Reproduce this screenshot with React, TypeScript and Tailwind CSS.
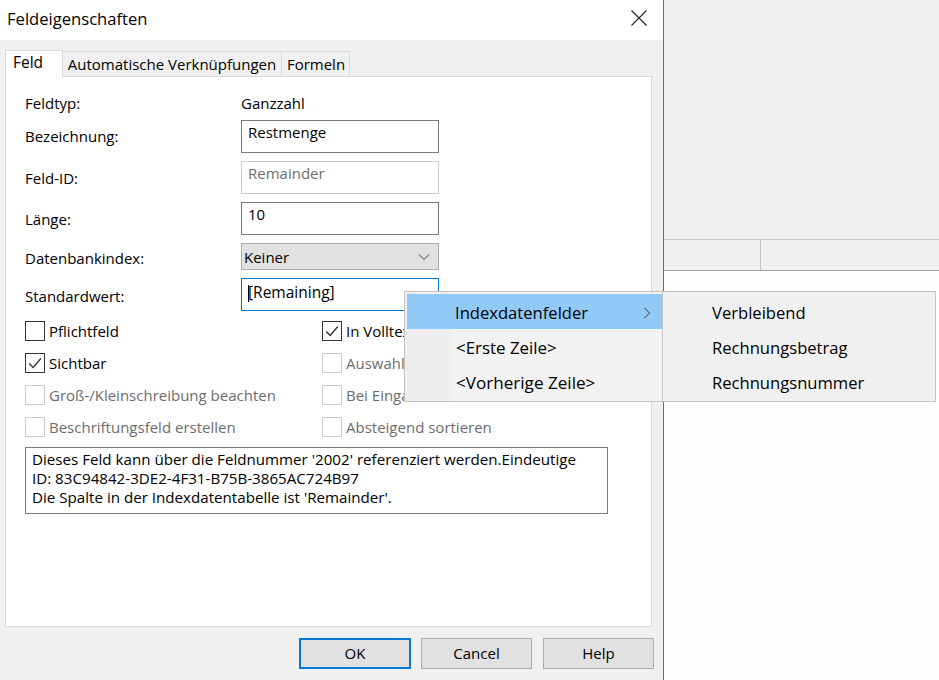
const font = { fontFamily: '"Open Sans", "Noto Sans", sans-serif' }

function Check({ label, checked, disabled }: { label: string; checked?: boolean; disabled?: boolean }) {
  return (
    <div className={`flex h-8 items-center gap-[4px] ${disabled ? 'text-[#6d6d6d]' : 'text-black'}`}>
      <span className={`flex h-5 w-5 items-center justify-center border bg-white ${disabled ? 'border-[#cccccc]' : 'border-[#333333]'}`}>
        {checked && (
          <svg viewBox="0 0 20 20" className="h-5 w-5" fill="none" stroke="#333333" strokeWidth="1.5">
            <path d="M3.5 10.5 L8 15 L16.5 5" />
          </svg>
        )}
      </span>
      <span>{label}</span>
    </div>
  )
}

function Field({ label, value, disabled, focused, labelClass }: { label: string; value: string; disabled?: boolean; focused?: boolean; labelClass?: string }) {
  const border = focused ? 'border-[#0078d7]' : disabled ? 'border-[#cccccc]' : 'border-[#7a7a7a]'
  return (
    <div className="flex h-[33px] items-center">
      <div className={`w-[216px] ${labelClass ?? ''}`}>{label}</div>
      <div className={`h-[33px] w-[198px] border bg-white pl-[6px] leading-[22px] ${border} ${disabled ? 'text-[#6d6d6d]' : ''} ${focused ? 'pt-[2px] text-[15.5px]' : ''}`}>
        {focused && <span className="-mr-px inline-block h-[17px] w-px bg-black align-middle" />}
        {value}
      </div>
    </div>
  )
}

function Btn({ label, primary }: { label: string; primary?: boolean }) {
  return (
    <div className={`flex h-[31px] items-center justify-center bg-[#e1e1e1] ${primary ? 'w-[112px] border-2 border-[#0078d7]' : 'w-[111px] border border-[#adadad]'}`}>
      {label}
    </div>
  )
}

export default function App() {
  return (
    <div className="relative flex h-[680px] w-[939px] overflow-hidden bg-white text-[15px] text-black" style={font}>
      <div className="flex w-[664px] flex-col border-r border-[#6d6d6d] bg-[#f0f0f0]">
        <div className="flex h-10 items-center justify-between bg-white pl-[7px] pr-[16px]">
          <span className="-mt-[2px] text-[16.6px]">Feldeigenschaften</span>
          <svg viewBox="0 0 16 16" className="-mt-[5px] h-4 w-4" fill="none" stroke="#222222" strokeWidth="1.1">
            <path d="M0.5 0.5 L15.5 15.5 M15.5 0.5 L0.5 15.5" />
          </svg>
        </div>
        <div className="flex h-9 items-end pl-[5px] pt-[10px]">
          <div className="z-10 -mb-px flex h-[27px] w-[58px] items-center border border-b-0 border-[#d9d9d9] bg-white pb-[3px] pl-[7px] text-[15.5px]">Feld</div>
          <div className="flex h-[25px] w-[219px] items-center justify-center border-t border-r border-[#d9d9d9]">Automatische Verknüpfungen</div>
          <div className="flex h-[25px] w-[68px] items-center justify-center border-t border-r border-[#d9d9d9] pl-px">Formeln</div>
        </div>
        <div className="ml-[5px] flex h-[551px] w-[647px] flex-col border border-[#d9d9d9] bg-white pl-[19px] pt-[13px]">
          <div className="mb-1 flex h-[26px] items-center">
            <div className="w-[216px]">Feldtyp:</div>
            <div>Ganzzahl</div>
          </div>
          <div className="flex flex-col gap-2">
            <Field label="Bezeichnung:" value="Restmenge" />
            <Field label="Feld-ID:" value="Remainder" disabled labelClass="pt-[2px]" />
            <Field label="Länge:" value="10" labelClass="pt-[2px]" />
            <div className="flex h-[27px] items-center">
              <div className="w-[216px] pt-[3px]">Datenbankindex:</div>
              <div className="flex h-[27px] w-[198px] items-center justify-between border border-[#adadad] bg-[#e1e1e1] pl-[2px] pr-[8px] pt-px">
                <span>Keiner</span>
                <svg viewBox="0 0 12 8" className="h-2 w-3" fill="none" stroke="#444444" strokeWidth="1">
                  <path d="M1 1.5 L6 6.5 L11 1.5" />
                </svg>
              </div>
            </div>
            <Field label="Standardwert:" value="[Remaining]" focused labelClass="pt-1" />
          </div>
          <div className="mt-1 grid w-[583px] grid-cols-[297px_1fr]">
            <Check label="Pflichtfeld" />
            <Check label="In Volltextsuche" checked />
            <Check label="Sichtbar" checked />
            <Check label="Auswahlliste" disabled />
            <Check label="Groß-/Kleinschreibung beachten" disabled />
            <Check label="Bei Eingabe" disabled />
            <Check label="Beschriftungsfeld erstellen" disabled />
            <Check label="Absteigend sortieren" disabled />
          </div>
          <div className="mt-1 h-[67px] w-[583px] border border-[#7a7a7a] px-[6px] pt-[2px] text-[15.15px] leading-[19px]">
            Dieses Feld kann über die Feldnummer '2002' referenziert werden.Eindeutige
            <br />
            ID: 83C94842-3DE2-4F31-B75B-3865AC724B97
            <br />
            Die Spalte in der Indexdatentabelle ist 'Remainder'.
          </div>
        </div>
        <div className="ml-[299px] mt-[11px] flex gap-[10px]">
          <Btn label="OK" primary />
          <Btn label="Cancel" />
          <div className="ml-px">
            <Btn label="Help" />
          </div>
        </div>
      </div>
      <div className="flex flex-1 flex-col">
        <div className="h-[240px] border-b border-[#c8c8c8] bg-[#f0f0f0]" />
        <div className="flex h-[31px] border-b border-[#a0a0a0] bg-[#f0f0f0]">
          <div className="w-[97px] border-r border-[#c0c0c0]" />
        </div>
        <div className="flex-1 bg-[#fdfdfd]" />
      </div>

      <div className="absolute left-[404px] top-[291px] flex h-[111px] w-[532px] border border-[#c4c4c4] bg-[#f0f0f0] text-[16.6px] text-black">
        <div className="w-[258px] border-r border-[#c4c4c4] bg-[linear-gradient(90deg,#eeeeee_46px,#f2f2f2_46px)] py-[2px] pl-[2px]">
          <div className="flex h-[35px] items-center justify-between bg-[#91c9f7] pl-[48px] pr-[11px] pt-[3px]">
            <span>Indexdatenfelder</span>
            <svg viewBox="0 0 8 12" className="h-3 w-2" fill="none" stroke="#333333" strokeWidth="1">
              <path d="M1.5 1 L6.5 6 L1.5 11" />
            </svg>
          </div>
          <div className="flex h-[35px] items-center pl-[49px] pt-[3px] text-[16.9px]">&lt;Erste Zeile&gt;</div>
          <div className="flex h-[35px] items-center pl-[49px] pt-[3px] text-[17.1px]">&lt;Vorherige Zeile&gt;</div>
        </div>
        <div className="flex-1 py-[2px] pl-[49px]">
          <div className="flex h-[35px] items-center pt-[3px]">Verbleibend</div>
          <div className="flex h-[35px] items-center pt-[3px]">Rechnungsbetrag</div>
          <div className="flex h-[35px] items-center pt-[3px]">Rechnungsnummer</div>
        </div>
      </div>
    </div>
  )
}
